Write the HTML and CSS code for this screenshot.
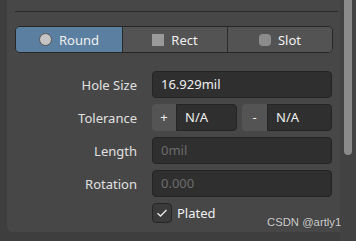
FILE: index.html
```html
<!DOCTYPE html>
<html>
  <head>
    <meta name="viewport" content="width=device-width, initial-scale=1.0" />
    <title>Pad Properties</title>
    <link rel="stylesheet" href="styles.css">
  </head>
  <body>
    <div class="window">
      <div class="panel">
        <div class="divider"></div>
        <div class="segmented">
          <button class="seg active"><span class="ico ico-round"></span>Round</button>
          <button class="seg"><span class="ico ico-rect"></span>Rect</button>
          <button class="seg"><span class="ico ico-slot"></span>Slot</button>
        </div>
        <div class="form">
          <label class="lbl">Hole Size</label>
          <div class="field">16.929mil</div>

          <label class="lbl">Tolerance</label>
          <div class="tol">
            <span class="sign sign-plus">+</span>
            <div class="field field-tol">N/A</div>
            <span class="sign sign-minus">-</span>
            <div class="field field-tol">N/A</div>
          </div>

          <label class="lbl">Length</label>
          <div class="field placeholder">0mil</div>

          <label class="lbl">Rotation</label>
          <div class="field placeholder">0.000</div>

          <span></span>
          <div class="check-row">
            <span class="checkbox">
              <svg width="12" height="10" viewBox="0 0 12 10"><path d="M1.5 5.2 L4.5 8 L10.5 2" fill="none" stroke="#e8e8e8" stroke-width="1.4"/></svg>
            </span>
            Plated
          </div>
        </div>
      </div>
      <div class="scrollbar"><div class="thumb"></div></div>
    </div>
    <div class="watermark">CSDN @artly1</div>
  </body>
</html>
```

FILE: styles.css
```css
body {
  margin: 0;
  width: 356px;
  height: 241px;
  overflow: hidden;
  background-color: #3e3e3e;
  color: #e6e6e6;
  font-family: "Noto Sans", "Open Sans", sans-serif;
  font-size: 12px;
  position: relative;
}

.window {
  display: flex;
  height: 232px;
}

.panel {
  margin-left: 7px;
  width: 333px;
  height: 232px;
  background: #474747;
  border-bottom-left-radius: 6px;
  padding: 11px 0 0 8px;
  box-sizing: border-box;
}

.divider {
  width: 323px;
  border-top: 1px solid #2a2a2a;
}

.segmented {
  display: flex;
  margin-top: 14px;
  width: 318px;
  height: 27px;
  border: 1px solid #262626;
  border-radius: 5px;
  overflow: hidden;
  box-sizing: border-box;
}

.seg {
  flex: 1;
  display: flex;
  align-items: center;
  justify-content: center;
  gap: 7px;
  background: #535353;
  color: #f0f0f0;
  font-family: inherit;
  font-size: 13px;
  border: none;
  border-left: 1px solid #2a2a2a;
  padding: 0;
}

.seg:first-child {
  border-left: none;
  flex: 0 0 106px;
}

.seg.active {
  background: #5b7fa1;
}

.ico {
  display: inline-block;
  width: 12px;
  height: 12px;
  box-sizing: border-box;
}

.ico-round {
  width: 13px;
  height: 13px;
  border-radius: 50%;
  background: #c4c4c4;
  border: 1px solid #555;
}

.ico-rect {
  background: #9a9a9a;
}

.ico-slot {
  background: #8c8c8c;
  border-radius: 4px;
}

.form {
  display: grid;
  grid-template-columns: 122px 180px;
  column-gap: 15px;
  row-gap: 6px;
  margin-top: 18px;
  align-items: center;
}

.lbl {
  text-align: right;
  font-size: 13px;
  color: #e0e0e0;
}

.field {
  height: 27px;
  line-height: 25px;
  padding-left: 8px;
  background: #2f2f2f;
  border: 1px solid #242424;
  border-radius: 4px;
  box-sizing: border-box;
  font-size: 13px;
  color: #f0f0f0;
}

.placeholder {
  color: #6c6c6c;
}

.tol {
  display: flex;
  height: 27px;
}

.sign {
  width: 24px;
  background: #545454;
  border-radius: 4px 0 0 4px;
  text-align: center;
  line-height: 27px;
  font-size: 13px;
  color: #f0f0f0;
}

.sign-minus {
  width: 25px;
  margin-left: 5px;
}

.field-tol {
  width: 61px;
  border-radius: 0 4px 4px 0;
}

.field-tol:last-child {
  width: 65px;
}

.check-row {
  display: flex;
  align-items: center;
  gap: 5px;
  height: 20px;
  font-size: 13px;
  color: #f0f0f0;
}

.checkbox {
  width: 20px;
  height: 20px;
  box-sizing: border-box;
  border: 1px solid #262626;
  border-radius: 4px;
  background: #3a3a3a;
  display: flex;
  align-items: center;
  justify-content: center;
}

.scrollbar {
  width: 16px;
  height: 241px;
  background: #424242;
  padding-left: 4px;
  box-sizing: border-box;
}

.thumb {
  width: 8px;
  height: 155px;
  background: #8a8a8a;
  border-radius: 0 0 4px 4px;
}

.watermark {
  position: absolute;
  left: 267px;
  top: 216px;
  font-family: "Liberation Sans", Arial, sans-serif;
  font-size: 11.3px;
  color: #cfcfcf;
  text-shadow: 0 0 1px #333;
}
```
